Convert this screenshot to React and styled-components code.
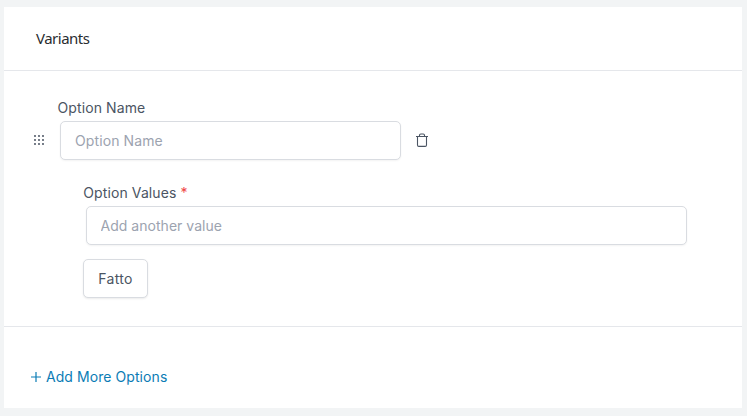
import { useState } from 'react'
import styled, { createGlobalStyle } from 'styled-components'

const GlobalStyle = createGlobalStyle`
  * {
    box-sizing: border-box;
  }
  body {
    margin: 0;
    background-color: #f2f4f5;
    color: #4b5563;
    font-family: Inter, "Liberation Sans", sans-serif;
    font-size: 14px;
    line-height: 20px;
  }
`
const Page = styled.main`
  height: 416px;
  padding: 7px 5px 8px 4px;
`
const Card = styled.section`
  height: 100%;
  display: flex;
  flex-direction: column;
  background-color: #fff;
`
const Header = styled.header`
  height: 64px;
  display: flex;
  align-items: center;
  padding: 0 32px 2px;
  border-bottom: 1px solid #e5e7eb;
`
const Title = styled.h2`
  margin: 0;
  color: #2a2d31;
  font-family: "Noto Sans", sans-serif;
  font-size: 15px;
  font-weight: 400;
  letter-spacing: -0.5px;
`
const Body = styled.form`
  height: 256px;
  padding: 27px 55px 0 29px;
  border-bottom: 1px solid #e5e7eb;
`
const Label = styled.label`
  display: block;
  height: 23px;
  margin-left: ${props => props.$indent};
  letter-spacing: 0.1px;
`
const Required = styled.span`
  color: #ef4444;
`
const Row = styled.div`
  display: flex;
  align-items: center;
`
const IconBtn = styled.button`
  width: 12px;
  height: 16px;
  display: flex;
  align-items: center;
  justify-content: center;
  margin-bottom: 2px;
  padding: 0;
  border: 0;
  background: none;
  color: #4b5563;
  cursor: pointer;
`
const Input = styled.input`
  width: ${props => props.$width};
  height: 39px;
  padding: 0 14px;
  border: 1px solid #d9dce1;
  border-radius: 5px;
  background-color: #fff;
  box-shadow: 0 1px 2px rgba(0, 0, 0, 0.05);
  color: inherit;
  font: inherit;
  letter-spacing: 0.1px;
  outline: none;
  &::placeholder {
    color: #9ca3af;
    opacity: 1;
  }
`
const ValueInput = styled(Input)`
  padding: 0 13.5px;
  letter-spacing: 0.03px;
`
const NameRow = styled(Row)`
  gap: 15px;
  margin-bottom: 23px;
`
const ValueRow = styled(Row)`
  padding-left: 3px;
`
const Values = styled.div`
  padding-left: 50px;
`
const Btn = styled.button`
  display: block;
  width: 65px;
  height: 39px;
  margin-top: 14px;
  padding: 0;
  border: 1px solid #d9dce1;
  border-radius: 5px;
  background-color: #fff;
  box-shadow: 0 1px 2px rgba(0, 0, 0, 0.08);
  color: #4b5563;
  font: inherit;
  letter-spacing: 0.3px;
  cursor: pointer;
`
const Footer = styled.footer`
  flex: 1;
  padding: 40px 27px 0;
`
const AddBtn = styled.button`
  display: flex;
  align-items: center;
  gap: 5px;
  padding: 0;
  border: 0;
  background: none;
  color: #0b7cb5;
  font: inherit;
  letter-spacing: 0.07px;
  cursor: pointer;
`

const DragIcon = () => (
  <svg width='12' height='12' viewBox='0 0 12 12' fill='#374151'>
    {[2, 6, 10].map(y => [2, 6, 10].map(x => (
      <circle key={`${x}-${y}`} cx={x} cy={y} r='0.9' />
    )))}
  </svg>
)

const TrashIcon = () => (
  <svg width='12' height='14' viewBox='0 0 12 14' fill='none' stroke='currentColor' strokeWidth='1.1'>
    <path d='M0 3.5h12M3.5 3.5V2.3Q3.5 1 4.8 1H7.2Q8.5 1 8.5 2.3V3.5M1.5 3.5V12Q1.5 13.4 2.8 13.4H9.2Q10.5 13.4 10.5 12V3.5' />
  </svg>
)

const PlusIcon = () => (
  <svg width='10' height='10' viewBox='0 0 10 10' fill='none' stroke='currentColor' strokeWidth='1.2'>
    <path d='M5 0v10M0 5h10' />
  </svg>
)

const App = () => {
  const [ name, setName ] = useState('')
  const [ value, setValue ] = useState('')

  return (
    <>
      <GlobalStyle />
      <Page>
        <Card>
          <Header>
            <Title>Variants</Title>
          </Header>
          <Body onSubmit={e => e.preventDefault()}>
            <Label htmlFor='name' $indent='24.5px'>Option Name</Label>
            <NameRow>
              <IconBtn type='button' aria-label='Reorder'><DragIcon /></IconBtn>
              <Input id='name' $width='341px' value={name} onChange={e => setName(e.target.value)} placeholder='Option Name' />
              <IconBtn type='button' aria-label='Delete'><TrashIcon /></IconBtn>
            </NameRow>
            <Values>
              <Label htmlFor='value' $indent='0.3px'>Option Values <Required>*</Required></Label>
              <ValueRow>
                <ValueInput id='value' $width='601px' value={value} onChange={e => setValue(e.target.value)} placeholder='Add another value' />
              </ValueRow>
              <Btn type='submit'>Fatto</Btn>
            </Values>
          </Body>
          <Footer>
            <AddBtn type='button'><PlusIcon />Add More Options</AddBtn>
          </Footer>
        </Card>
      </Page>
    </>
  )
}

export default App
